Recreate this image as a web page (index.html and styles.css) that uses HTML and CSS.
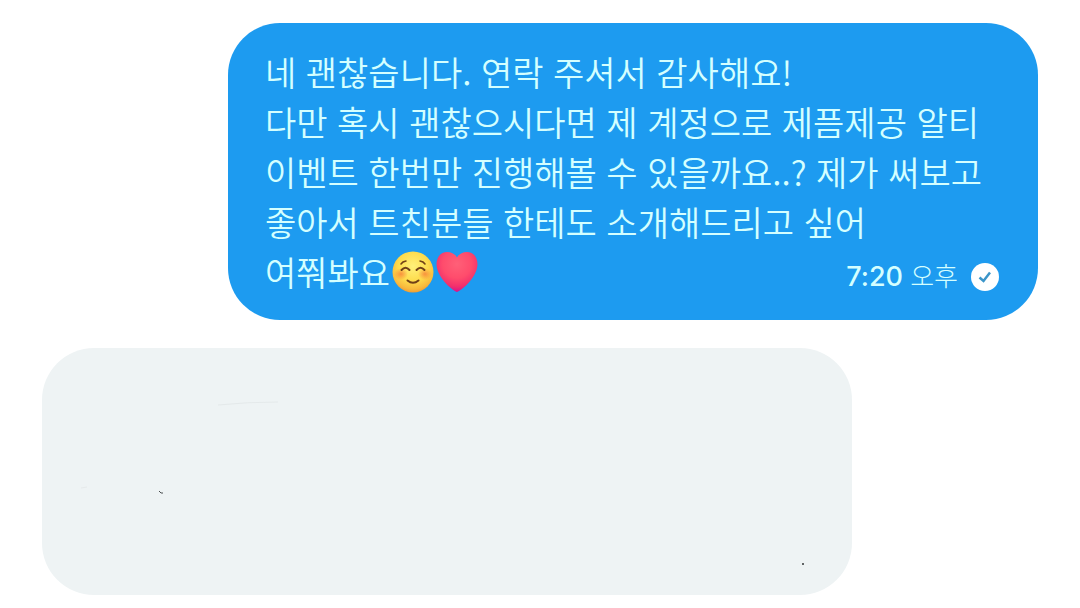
FILE: index.html
```html
<!DOCTYPE html>
<html lang="ko">

<head>
    <meta charset="UTF-8">
    <meta name="viewport" content="width=device-width, initial-scale=1.0">
    <title>쪽지</title>
    <link rel="stylesheet" href="styles.css">
</head>

<body>
    <main class="chat">
        <article class="bubble sent">
            <p>네 괜찮습니다. 연락 주셔서 감사해요!<br>
                다만 혹시 괜찮으시다면 제 계정으로 제픔제공 알티<br>
                이벤트 한번만 진행해볼 수 있을까요..? 제가 써보고<br>
                좋아서 트친분들 한테도 소개해드리고 싶어</p>
            <div class="last-line">
                <span>여쭤봐요</span>
                <svg class="emoji" viewBox="0 0 42 42" role="img" aria-label="웃는 얼굴">
                    <defs>
                        <radialGradient id="face" cx="50%" cy="36%" r="66%">
                            <stop offset="0" stop-color="#fff07a" />
                            <stop offset="0.55" stop-color="#fedc4c" />
                            <stop offset="0.85" stop-color="#f8b83c" />
                            <stop offset="1" stop-color="#ee9632" />
                        </radialGradient>
                        <radialGradient id="cheek">
                            <stop offset="0" stop-color="#f56a35" stop-opacity="0.65" />
                            <stop offset="1" stop-color="#f56a35" stop-opacity="0" />
                        </radialGradient>
                    </defs>
                    <circle cx="21" cy="21" r="20.5" fill="url(#face)" />
                    <ellipse cx="9" cy="23" rx="7" ry="6" fill="url(#cheek)" />
                    <ellipse cx="33" cy="23" rx="7" ry="6" fill="url(#cheek)" />
                    <g fill="none" stroke="#704018" stroke-linecap="round">
                        <path d="M9 13Q10.500 10.500 14 10M28 10Q31.500 10.500 33 13" stroke-width="1.500" />
                        <path d="M9.500 19Q13.500 14.500 17.500 19M24.500 19Q28.500 14.500 32.500 19" stroke-width="2" />
                        <path d="M15.500 29.500Q21 34 26.500 29.500" stroke-width="2" />
                    </g>
                </svg>
                <svg class="emoji" viewBox="0 0 42 42" role="img" aria-label="하트">
                    <defs>
                        <radialGradient id="heart" cx="50%" cy="30%" r="70%">
                            <stop offset="0" stop-color="#ff6078" />
                            <stop offset="0.5" stop-color="#ff4c6c" />
                            <stop offset="0.8" stop-color="#f2306c" />
                            <stop offset="1" stop-color="#d8108c" />
                        </radialGradient>
                    </defs>
                    <path d="M21 41C18.500 41 .5 27 .5 13C.5 6 5 1 11 1C16 1 19.500 3.500 21 6.500C22.500 3.500 26 1 31 1C37 1 41.500 6 41.500 13C41.500 27 23.500 41 21 41Z" fill="url(#heart)" />
                </svg>
                <div class="meta">
                    <time datetime="19:20">7:20 <span class="half">오후</span></time>
                    <svg class="check" viewBox="0 0 28 28" role="img" aria-label="전송됨">
                        <circle cx="14" cy="14" r="14" fill="#ffffff" />
                        <path d="M8.500 14.500L12.500 18L19 9.500" fill="none" stroke="#3b95c9" stroke-width="2.500" />
                    </svg>
                </div>
            </div>
        </article>

        <article class="bubble received">
            <!-- pen marks left on the erased message -->
            <svg class="marks" viewBox="0 0 810 247" aria-hidden="true">
                <path d="M176 57Q205 54 236 54" fill="none" stroke="#e4e9ea" />
                <path d="M39 140L45 139" fill="none" stroke="#e6eaeb" />
                <path d="M117 143L119 145L121 145" fill="none" stroke="#4a4e50" />
                <circle cx="761" cy="216" r="1" fill="#303436" />
            </svg>
        </article>
    </main>
</body>

</html>
```

FILE: styles.css
```css
* {
    box-sizing: border-box;
}

body {
    margin: 0;
    background-color: #ffffff;
    font-family: "Noto Sans CJK KR", sans-serif;
}

.chat {
    display: flex;
    flex-direction: column;
    gap: 28px;
    padding: 23px 42px 13px;
}

.bubble {
    width: 810px;
    max-width: 100%;
    border-radius: 52px;
}

.sent {
    align-self: flex-end;
    padding: 24px 39px 23px 37px;
    background-color: #1d9bf0;
    color: #d4ffff;
    font-size: 34px;
    font-weight: 350;
    line-height: 50px;
}

.sent p {
    margin: 0;
}

.last-line {
    display: flex;
    align-items: center;
    height: 50px;
}

.emoji {
    width: 42px;
    height: 42px;
    margin-left: 2px;
}

.meta {
    display: flex;
    align-items: center;
    gap: 13px;
    margin-left: auto;
    padding-top: 10px;
}

.meta time {
    font-family: Inter, "Noto Sans CJK KR", sans-serif;
    font-size: 27px;
    font-weight: 500;
}

.half {
    font-size: 26px;
    font-weight: 300;
}

.check {
    width: 28px;
    height: 28px;
}

.received {
    background-color: #eef3f4;
}

.marks {
    display: block;
    width: 100%;
}
```
